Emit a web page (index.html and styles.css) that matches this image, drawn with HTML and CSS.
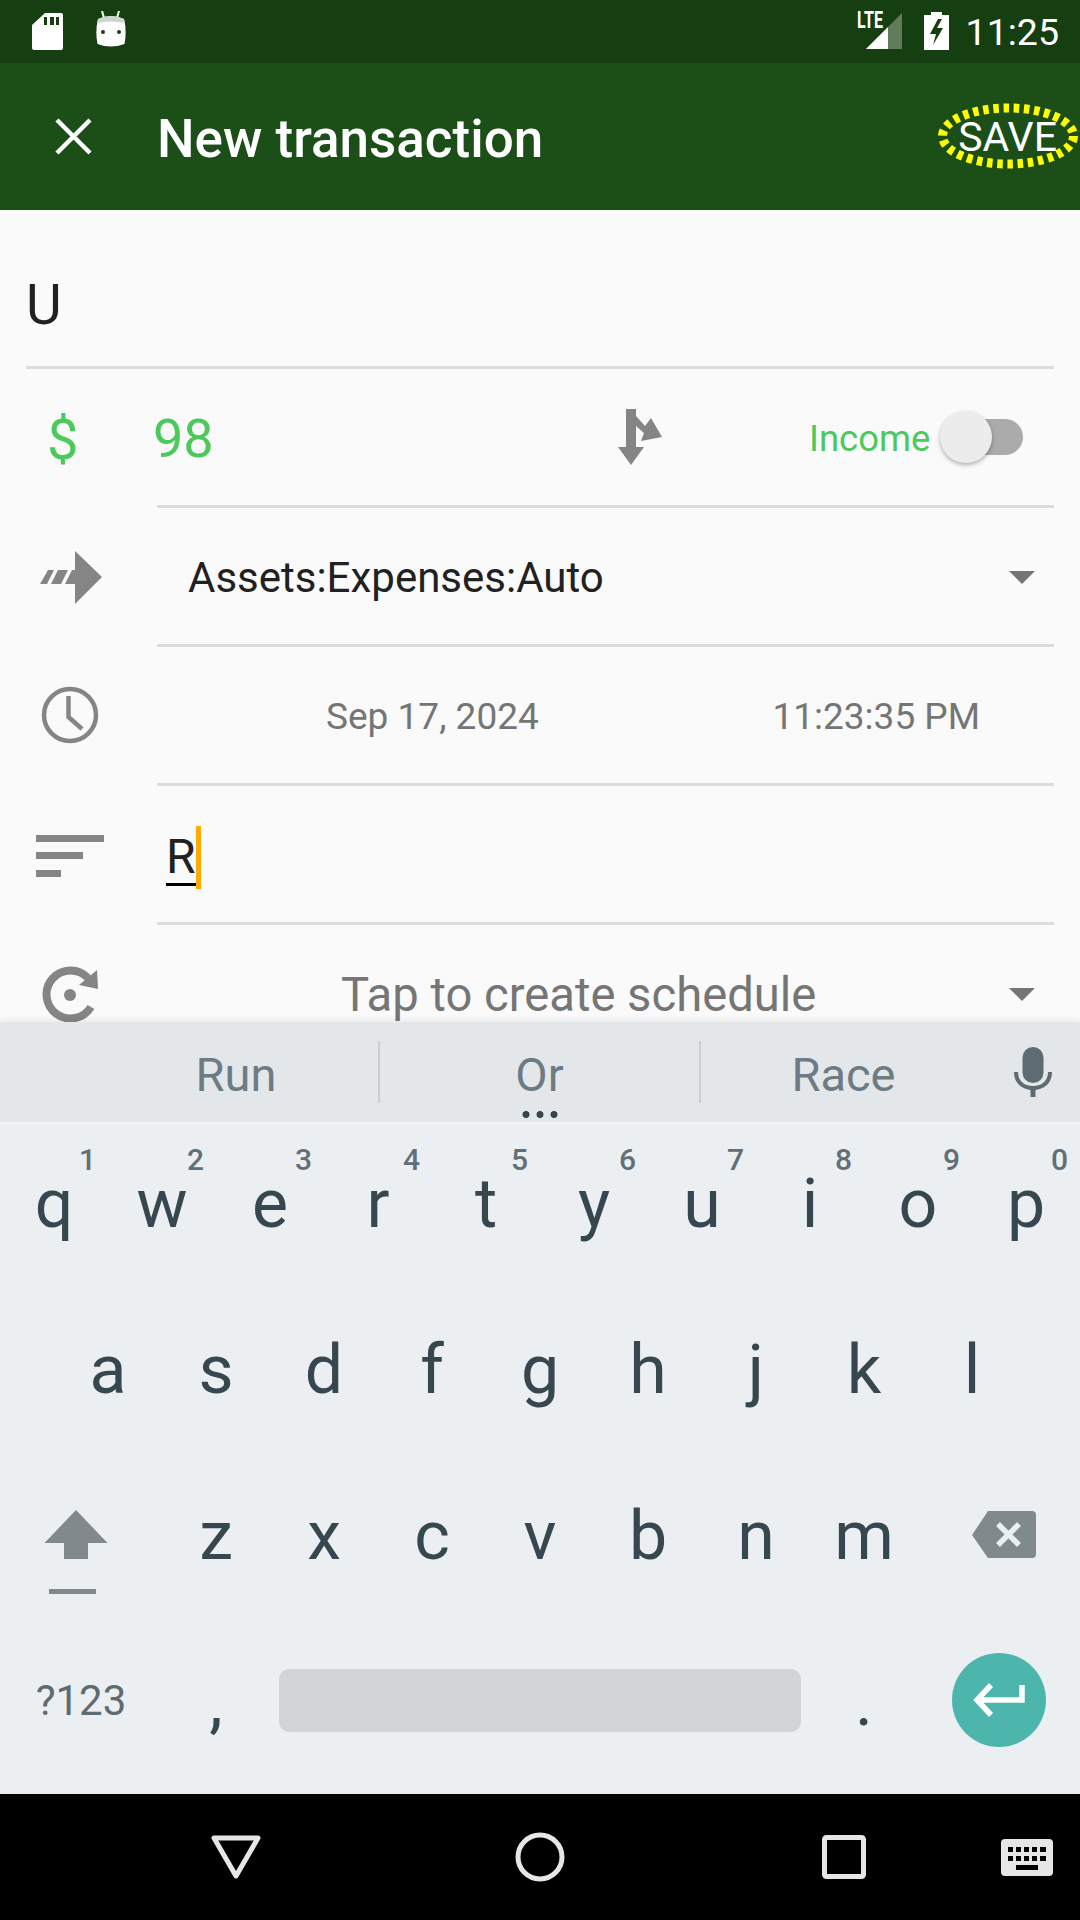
FILE: index.html
```html
<!DOCTYPE html>
<html lang="en">
<head>
<meta charset="utf-8">
<title>New transaction</title>
<link rel="stylesheet" href="styles.css">
</head>
<body>
<div class="screen">
  <header class="statusbar">
    <svg class="st-sd" width="31" height="37" viewBox="0 0 31 37"><path fill="#fff" d="M13 0H29a2 2 0 0 1 2 2V35a2 2 0 0 1-2 2H2a2 2 0 0 1-2-2V12Z"/><path fill="#153f11" d="M12 4h3v8h-3zM18 4h4v8h-4zM24 4h3v8h-3z"/></svg>
    <svg class="st-android" width="32" height="37" viewBox="0 0 32 37"><path stroke="#fff" stroke-width="2" d="M7 0l2 7M24 0l-2 7"/><path fill="#fff" d="M3 8Q16 2 29 8Q32 20 29.500 33Q16 38 2.500 33Q0 20 3 8Z"/><path fill="#cdd6cc" d="M3 8Q16 2 29 8L30 12Q16 9 2 12Z"/><circle cx="8" cy="21" r="2" fill="#153f11"/><circle cx="24" cy="21" r="2" fill="#153f11"/></svg>
    <span class="st-spacer"></span>
    <span class="st-lte">LTE</span>
    <svg class="st-signal" width="36" height="36" viewBox="0 0 36 36"><path fill="#fff" fill-opacity=".32" d="M36 0V36H0Z"/><path fill="#fff" d="M22 14V36H0Z"/></svg>
    <svg class="st-battery" width="25" height="38" viewBox="0 0 25 38"><path fill="#fff" d="M7 0H18V3H25V38H0V3H7Z"/><path fill="#153f11" d="M14 7 6 22H12L9 33 19 16H13L18 7Z"/></svg>
    <span class="st-time">11:25</span>
  </header>

  <div class="toolbar">
    <svg class="tb-close" width="37" height="37" viewBox="0 0 37 37"><path stroke="#fff" stroke-width="4.500" d="M2 2 35 35M35 2 2 35"/></svg>
    <h1 class="tb-title">New transaction</h1>
    <span class="tb-save">SAVE
      <svg class="tb-ring" width="144" height="72" viewBox="0 0 144 72"><ellipse cx="72" cy="36" rx="65.500" ry="28" fill="none" stroke="#ffff00" stroke-width="9" stroke-dasharray="5.500 4.700"/></svg>
    </span>
  </div>

  <main class="content">
    <div class="title-field">U</div>

    <div class="row">
      <span class="row-icon dollar">$</span>
      <div class="field amount-field">
        <span class="amount">98</span>
        <svg class="split" width="46" height="58" viewBox="0 0 46 58"><path fill="#858585" d="M8 1H18V8L27 18 33 10 44 29 23 33 26 25 18 18V39H26L13 57 0 39H8Z"/></svg>
        <span class="income">Income</span>
        <span class="switch"><span class="thumb"></span></span>
      </div>
    </div>

    <div class="row">
      <svg class="row-svg" width="64" height="54" viewBox="0 0 64 54"><path fill="#858585" d="M36 0 63 26 36 53V33H26L33 19H36ZM9 19H15L8 33H1ZM19 19H29L22 33H12Z"/></svg>
      <div class="field account">Assets:Expenses:Auto<span class="caret"></span></div>
    </div>

    <div class="row">
      <svg class="row-svg row-svg-clock" width="58" height="58" viewBox="0 0 58 58"><circle cx="29" cy="29" r="26" fill="none" stroke="#858585" stroke-width="4.500"/><path fill="none" stroke="#858585" stroke-width="4.500" d="M27.500 10V31L41 43"/></svg>
      <div class="field datetime"><span class="date">Sep 17, 2024</span><span class="time">11:23:35 PM</span></div>
    </div>

    <div class="row">
      <svg class="row-svg" width="68" height="42" viewBox="0 0 68 42"><path fill="#858585" d="M0 0H68V7H0ZM0 17H47V24H0ZM0 35H25V42H0Z"/></svg>
      <div class="field memo"><span class="memo-text">R</span><span class="cursor"></span></div>
    </div>

    <div class="row">
      <svg class="row-svg" width="58" height="58" viewBox="0 0 58 58"><path fill="none" stroke="#858585" stroke-width="8" d="M47 12A24 24 0 1 0 50 41"/><path fill="#858585" d="M56 4 57 23 38 19Z"/><circle cx="29" cy="29" r="6" fill="#858585"/></svg>
      <div class="field schedule"><span class="schedule-text">Tap to create schedule</span><span class="caret"></span></div>
    </div>
  </main>

  <section class="keyboard">
    <div class="suggestions">
      <span class="sug">Run</span>
      <span class="sug sug-mid">Or<span class="dots"></span></span>
      <span class="sug">Race</span>
      <svg class="mic" width="38" height="50" viewBox="0 0 38 50"><rect x="8.500" y="0" width="21" height="36" rx="10.500" fill="#5d6b73"/><path fill="none" stroke="#5d6b73" stroke-width="4" d="M2 25C2 35 9 41 19 41S36 35 36 25"/><path stroke="#5d6b73" stroke-width="5" d="M19 40V50"/></svg>
    </div>
    <div class="keys">
      <div class="keyrow">
        <span class="key">q<i class="hint">1</i></span><span class="key">w<i class="hint">2</i></span><span class="key">e<i class="hint">3</i></span><span class="key">r<i class="hint">4</i></span><span class="key">t<i class="hint">5</i></span><span class="key">y<i class="hint">6</i></span><span class="key">u<i class="hint">7</i></span><span class="key">i<i class="hint">8</i></span><span class="key">o<i class="hint">9</i></span><span class="key">p<i class="hint">0</i></span>
      </div>
      <div class="keyrow keyrow-home">
        <span class="key">a</span><span class="key">s</span><span class="key">d</span><span class="key">f</span><span class="key">g</span><span class="key">h</span><span class="key">j</span><span class="key">k</span><span class="key">l</span>
      </div>
      <div class="keyrow">
        <span class="key key-wide key-shift"><svg width="64" height="86" viewBox="0 0 64 86"><path fill="#82898c" d="M32 0 63.500 33H44V49H20V33H.5Z"/><path fill="#82898c" d="M5 79H52V84H5Z"/></svg></span>
        <span class="key">z</span><span class="key">x</span><span class="key">c</span><span class="key">v</span><span class="key">b</span><span class="key">n</span><span class="key">m</span>
        <span class="key key-wide key-back"><svg width="64" height="48" viewBox="0 0 64 48"><path fill="#80898c" d="M16 0H60a4 4 0 0 1 4 4V43a4 4 0 0 1-4 4H16L0 24Z"/><path stroke="#eceff1" stroke-width="5.500" d="M26 13 47 34M47 13 26 34"/></svg></span>
      </div>
      <div class="keyrow">
        <span class="key key-wide key-sym">?123</span>
        <span class="key">,</span>
        <span class="key-space"><span class="spacebar"></span></span>
        <span class="key">.</span>
        <span class="key-enter"><span class="enter"><svg width="52" height="34" viewBox="0 0 52 34"><path fill="none" stroke="#fff" stroke-width="5.500" d="M49 2V17H5M18 2 4 17 18 32"/></svg></span></span>
      </div>
    </div>
  </section>

  <nav class="navbar">
    <svg class="nav-back" width="50" height="44" viewBox="0 0 50 44"><path fill="none" stroke="#e6e6e6" stroke-width="5" stroke-linejoin="round" d="M3 3H47L25 41Z"/></svg>
    <svg class="nav-home" width="50" height="50" viewBox="0 0 50 50"><circle cx="25" cy="25" r="22" fill="none" stroke="#e6e6e6" stroke-width="5"/></svg>
    <svg class="nav-recent" width="44" height="44" viewBox="0 0 44 44"><rect x="2.500" y="2.500" width="39" height="39" rx="2" fill="none" stroke="#e6e6e6" stroke-width="5"/></svg>
    <svg class="nav-kbd" width="52" height="37" viewBox="0 0 52 37"><rect width="52" height="37" rx="4" fill="#e6e6e6"/><path fill="#000" d="M7 8h5v5H7zM15 8h5v5h-5zM23 8h5v5h-5zM31 8h5v5h-5zM39 8h6v5h-6zM7 17h5v5H7zM15 17h5v5h-5zM23 17h5v5h-5zM31 17h5v5h-5zM39 17h6v5h-6zM15 26h22v5H15z"/></svg>
  </nav>
</div>
</body>
</html>
```

FILE: styles.css
```css
* { box-sizing: border-box; }
html, body { margin: 0; padding: 0; }
body { font-family: Roboto, "Liberation Sans", sans-serif; background: #000; }
.screen { width: 1080px; height: 1920px; display: flex; flex-direction: column; overflow: hidden; }

/* status bar */
.statusbar { flex: none; height: 63px; background: #153f11; display: flex; align-items: flex-start; color: #fff; }
.st-sd { margin: 13px 0 0 32px; }
.st-android { margin: 11px 0 0 32px; }
.st-spacer { flex: 1; }
.st-lte { font-size: 23px; font-weight: 700; transform: scaleX(.7); transform-origin: left top; width: 25px; margin-top: 9px; line-height: 24px; }
.st-signal { margin: 13px 0 0 -16px; }
.st-battery { margin: 12px 0 0 22px; }
.st-time { font-size: 37.500px; line-height: 46px; margin: 9px 21px 0 17px; }

/* toolbar */
.toolbar { flex: none; height: 147px; background: #1c4e17; display: flex; align-items: center; color: #fff; }
.tb-close { margin-left: 55px; }
.tb-title { margin: 5px 0 0 65px; font-size: 53px; font-weight: 500; line-height: 60px; }
.tb-save { position: relative; margin-left: auto; margin-right: 23px; font-size: 41px; line-height: 50px; }
.tb-ring { position: absolute; left: -22px; top: -12px; }

/* content */
.content { flex: 1; min-height: 0; overflow: hidden; background: #fafafa; }
.title-field { height: 159px; margin: 0 26px; padding-top: 64px; font-size: 55px; line-height: 62px; color: #212121; border-bottom: 3px solid #dcdcdc; }
.row { display: flex; height: 139px; }
.row-icon, .row-svg { flex: none; }
.row-svg { align-self: center; margin-left: 41px; margin-right: 58px; }
.row:nth-child(3) .row-svg { margin-left: 39px; margin-right: 54px; }
.row:nth-child(5) .row-svg { margin-left: 36px; margin-right: 53px; }
.row-svg-clock { margin-bottom: 3px; }
.dollar { width: 157px; padding-left: 47px; padding-top: 2px; font-size: 56px; line-height: 139px; color: #4bc95a; }
.field { flex: 1; margin-right: 26px; padding-top: 2px; display: flex; align-items: center; border-bottom: 3px solid #dcdcdc; }

.amount { font-size: 54px; color: #4bc95a; width: 461px; margin-left: -4px; margin-right: 4px; }
.split { flex: none; margin-bottom: 3px; }
.income { margin-left: 145px; font-size: 36.500px; color: #4bc95a; }
.switch { position: relative; width: 64px; height: 36px; margin-left: 29px; border-radius: 18px; background: #ababab; margin-bottom: 2px; }
.thumb { position: absolute; left: -19px; top: -8px; width: 52px; height: 52px; border-radius: 50%; background: #ececec; box-shadow: 0 2px 4px rgba(0,0,0,.3); }

.account { justify-content: space-between; padding-left: 31px; font-size: 42px; color: #212121; }
.caret { width: 0; height: 0; margin-right: 19px; border-left: 13px solid transparent; border-right: 13px solid transparent; border-top: 13px solid #757575; }

.datetime { font-size: 37px; color: #757575; }
.date { margin-left: 169px; }
.time { margin-left: auto; margin-right: 74px; }

.memo { padding-left: 9px; font-size: 48px; color: #212121; }
.memo-text { line-height: 62px; height: 60px; margin-top: 2px; border-bottom: 3px solid #000; }
.cursor { width: 5px; height: 63px; margin-top: 4px; background: #ffab00; }

.schedule { justify-content: space-between; padding-top: 0; padding-left: 184px; font-size: 47.200px; color: #757575; border-bottom: 0; }

/* keyboard */
.keyboard { flex: none; height: 772px; background: #eceff1; box-shadow: 0 -3px 5px rgba(0,0,0,.06); position: relative; }
.suggestions { height: 102px; background: #e3e7ea; border-bottom: 2px solid #f3f5f7; display: flex; align-items: center; font-size: 47px; color: #6d7c84; }
.sug { height: 62px; line-height: 68px; text-align: center; position: relative; }
.sug:first-child { width: 380px; padding-left: 138px; padding-right: 44px; border-right: 2px solid #c8ced1; }
.sug-mid { width: 321px; border-right: 2px solid #c8ced1; }
.sug:nth-child(3) { width: 285px; }
.dots { position: absolute; left: 139px; top: 70px; width: 40px; height: 7px; background: radial-gradient(circle, #37474f 3.200px, transparent 3.800px) 0 0 / 14px 7px repeat-x; }
.mic { margin-left: 28px; }

.keys { height: 670px; }
.keyrow { display: flex; height: 166px; }
.keyrow-home { padding-left: 54px; }
.key { position: relative; flex: none; width: 108px; height: 166px; line-height: 160px; font-size: 68px; text-align: center; color: #37474f; }
.key-wide { width: 162px; }
.hint { position: absolute; right: 12px; top: 19px; font-style: normal; font-weight: 500; font-size: 30px; line-height: 34px; color: #607078; }
.key-shift { display: flex; justify-content: center; padding: 54px 10px 0 0; }
.key-back { display: flex; justify-content: center; padding: 55px 0 0 10px; }
.key-sym { font-size: 42px; line-height: 158px; color: #5d6b73; }
.key-space { flex: 1; display: flex; align-items: center; height: 166px; padding: 0 9px 10px; }
.spacebar { width: 100%; height: 63px; border-radius: 10px; background: #d1d5d8; }
.key-enter { flex: none; width: 162px; height: 166px; display: flex; align-items: center; justify-content: center; padding-bottom: 10px; }
.enter { width: 94px; height: 94px; border-radius: 50%; background: #4db6ac; display: flex; align-items: center; justify-content: center; }

/* nav */
.navbar { flex: none; height: 126px; background: #000; position: relative; display: flex; align-items: center; }
.nav-back { margin-left: 211px; }
.nav-home { margin-left: 254px; }
.nav-recent { margin-left: 257px; }
.nav-kbd { margin-left: 135px; }
```
